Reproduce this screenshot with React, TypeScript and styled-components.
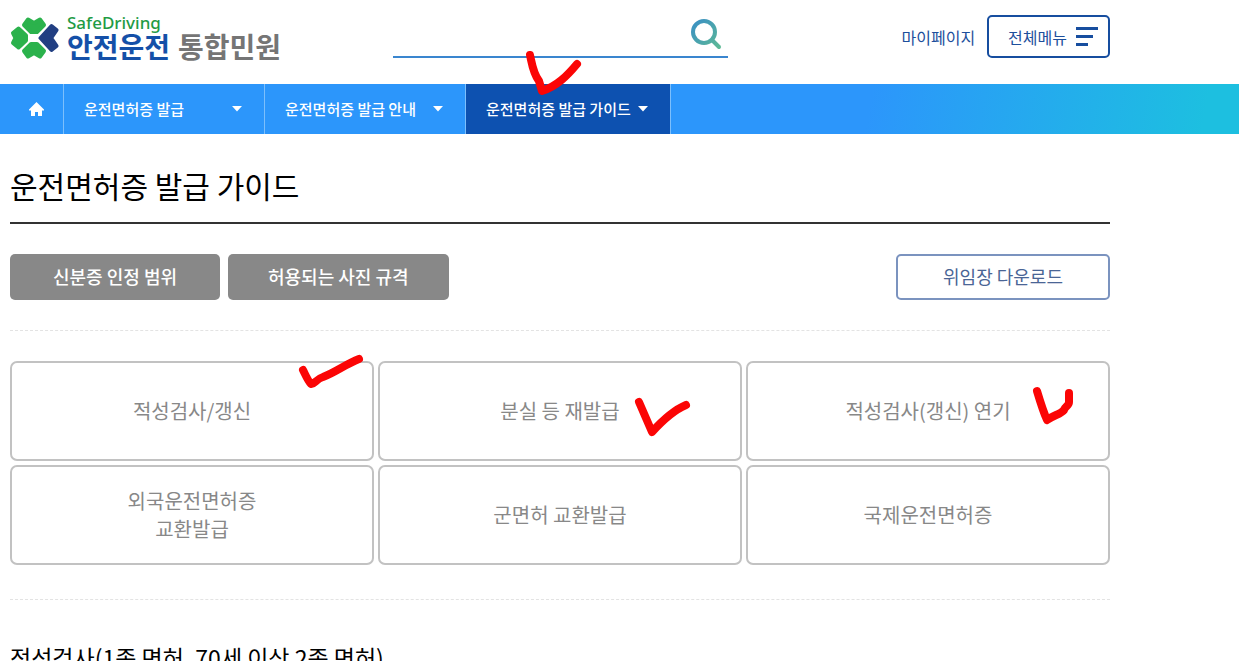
import React from "react";
import styled, { createGlobalStyle } from "styled-components";

const Global = createGlobalStyle`
  *, *::before, *::after { box-sizing: border-box; }
  body {
    margin: 0;
    background: #fff;
    color: #000;
    font-family: "Noto Sans CJK KR", "Noto Sans", sans-serif;
    word-break: keep-all;
  }
  button, input { font: inherit; }
  h1, h2 { margin: 0; }
`;

const Page = styled.div`
  height: 100vh;
  overflow-y: auto;
  scrollbar-width: none;
`;

const Container = styled.div`
  max-width: 1120px;
  padding: 0 10px;
`;

const HeaderRow = styled(Container)`
  display: flex;
  align-items: center;
  height: 84px;
  padding-bottom: 12px;
`;

const Logo = styled.a`
  display: flex;
  align-items: center;
  gap: 8px;
  flex: 0 0 272px;
  padding-top: 4px;
  color: #1450a8;
  text-decoration: none;
  white-space: nowrap;
`;

const LogoText = styled.span`
  display: flex;
  flex-direction: column;
  padding-bottom: 2px;
`;

const LogoEnglish = styled.span`
  font-family: "Noto Sans", sans-serif;
  font-size: 17px;
  font-weight: 500;
  line-height: 18px;
  color: #1f9b45;
`;

const LogoKorean = styled.span`
  display: flex;
  gap: 8px;
  font-size: 28px;
  font-weight: 700;
  line-height: 28px;
`;

const LogoSuffix = styled.span`
  color: #757575;
`;

const Search = styled.form`
  display: flex;
  align-items: center;
  flex: 0 1 335px;
  height: 44px;
  margin-left: 111px;
  border-bottom: 2px solid #3a86cf;
`;

const SearchInput = styled.input`
  flex: 1;
  min-width: 0;
  height: 40px;
  border: 0;
  outline: 0;
  background: transparent;
  font-size: 16px;
`;

const SearchButton = styled.button`
  display: flex;
  padding: 0 6px 2px 0;
  border: 0;
  background: transparent;
`;

const HeaderLinks = styled.div`
  display: flex;
  align-items: center;
  gap: 12px;
  margin-left: auto;
`;

const MyPage = styled.a`
  padding-top: 2px;
  font-size: 16px;
  line-height: 24px;
  color: #1d4f9c;
  text-decoration: none;
`;

const AllMenu = styled.button`
  display: flex;
  align-items: center;
  gap: 9px;
  height: 43px;
  padding: 0 10px 0 19px;
  border: 2px solid #174e9f;
  border-radius: 5px;
  background: #fff;
  color: #1d4f9c;
  font-size: 16px;
  line-height: 24px;
`;

const AllMenuLabel = styled.span`
  padding-top: 2px;
`;

const NavBar = styled.nav`
  display: flex;
  height: 50px;
  background: linear-gradient(100deg, #2c96fb 0%, #2c96fb 70%, #1dbfe0 97%, #1dbfe0 100%);
`;

const HomeLink = styled.a`
  display: flex;
  align-items: center;
  justify-content: flex-end;
  width: 64px;
  padding-right: 18px;
  border-right: 1px solid #7cbffc;
`;

const NavTab = styled.button<{ $active?: boolean }>`
  position: relative;
  display: flex;
  align-items: center;
  justify-content: space-between;
  gap: 7px;
  min-width: 201px;
  padding: 0 22px 0 20px;
  border: 0;
  border-right: 1px solid #7cbffc;
  background: ${(p) => (p.$active ? "#0d51b0" : "transparent")};
  color: #fff;
  font-size: 15px;
  font-weight: 500;
  white-space: nowrap;
`;

const NavLabel = styled.span`
  padding-bottom: 2px;
`;

const Title = styled.h1`
  padding: 28px 0 13px;
  border-bottom: 2px solid #333;
  font-size: 30px;
  font-weight: 400;
  line-height: 47px;
`;

const Actions = styled.div`
  display: flex;
  gap: 8px;
  padding: 30px 0;
  border-bottom: 1px dashed #e3e3e3;
`;

const ActionButton = styled.button`
  height: 46px;
  padding: 0 40px 2px;
  min-width: 210px;
  border: 0;
  border-radius: 5px;
  background: #888;
  color: #fff;
  font-size: 18px;
  font-weight: 500;
`;

const DownloadButton = styled(ActionButton)`
  min-width: 214px;
  margin-left: auto;
  border: 2px solid #7b93bf;
  background: #fff;
  color: #4a6595;
  font-weight: 400;
`;

const CardGrid = styled.div`
  display: grid;
  grid-template-columns: repeat(3, 1fr);
  gap: 4px;
  padding: 30px 0 34px;
  border-bottom: 1px dashed #e3e3e3;
`;

const Card = styled.button`
  position: relative;
  height: 100px;
  padding: 0 20px;
  border: 2px solid #c2c2c2;
  border-radius: 7px;
  background: #fff;
  color: #888;
  font-size: 20px;
  line-height: 28px;
  white-space: pre-line;
`;

const SectionTitle = styled.h2`
  padding: 39px 0;
  font-size: 23px;
  font-weight: 400;
  line-height: 36px;
`;

const Mark = styled.svg<{ $x: number; $y: number }>`
  position: absolute;
  z-index: 1;
  left: ${(p) => p.$x}px;
  top: ${(p) => p.$y}px;
  overflow: visible;
  pointer-events: none;
  fill: none;
  stroke: #fb0505;
  stroke-width: 8;
  stroke-linecap: round;
  stroke-linejoin: round;
`;

type MarkShape = { x: number; y: number; d: string };

const CheckMark = ({ x, y, d }: MarkShape) => (
  <Mark $x={x} $y={y} width="56" height="44" aria-hidden="true">
    <path d={d} />
  </Mark>
);

const Caret = () => (
  <svg width="10" height="6" viewBox="0 0 10 6" aria-hidden="true">
    <path d="M0 0h10L5 5.5z" fill="#fff" />
  </svg>
);

const LogoIcon = () => (
  <svg width="49" height="44" viewBox="0 0 49 44" aria-hidden="true">
    <g strokeLinejoin="round" strokeWidth="4">
      <path d="M18 3.500l6 3.500 6-3.500 4 5.500-7 7h-6L14 9z" fill="#2bb24c" stroke="#2bb24c" />
      <path d="M18 40.500l6-3.500 6 3.500 4-5.500-7-7h-6L14 35z" fill="#2bb24c" stroke="#2bb24c" />
      <path d="M8.500 12.500L3 17l2.500 5L3 27l5.500 4.500L16 24.500v-5z" fill="#2bb24c" stroke="#2bb24c" />
      <path d="M41.500 10L30.500 22l11 12 5-4L41 22l5.500-8z" fill="#223f82" stroke="#223f82" />
    </g>
  </svg>
);

const SearchIcon = () => (
  <svg width="32" height="32" viewBox="0 0 32 32" fill="none" aria-hidden="true">
    <defs>
      <linearGradient id="lens" x1="0" y1="0" x2="32" y2="32" gradientUnits="userSpaceOnUse">
        <stop offset="0" stopColor="#368bc9" />
        <stop offset="1" stopColor="#60bd91" />
      </linearGradient>
    </defs>
    <circle cx="14" cy="14" r="11" stroke="url(#lens)" strokeWidth="4" />
    <path d="M22 22l7 7" stroke="url(#lens)" strokeWidth="4" strokeLinecap="round" />
  </svg>
);

const MenuIcon = () => (
  <svg width="22" height="19" viewBox="0 0 22 19" fill="#174e9f" aria-hidden="true">
    <path d="M0 0h22v3H0zM0 8h17v3H0zM0 16h12v3H0z" />
  </svg>
);

const HomeIcon = () => (
  <svg width="16" height="15" viewBox="0 0 16 15" fill="#fff" aria-hidden="true">
    <path d="M7.500 0L15 7.500V8.500H13V14H9V10H6V14H2V8.500H0V7.500z" />
  </svg>
);

const tabs: { label: string; active?: boolean; mark?: MarkShape }[] = [
  { label: "운전면허증 발급" },
  { label: "운전면허증 발급 안내" },
  {
    label: "운전면허증 발급 가이드",
    active: true,
    mark: { x: 60, y: -34, d: "M4 5C6 14 7 23 13 31L16 41C31 36 41 26 51 14" },
  },
];

const cards: { label: string; mark?: MarkShape }[] = [
  { label: "적성검사/갱신", mark: { x: 286, y: -9, d: "M5 16C8 22 10 27 13 30C16 31 18 25 25 23C38 18 48 10 61 5" } },
  { label: "분실 등 재발급", mark: { x: 254, y: 34, d: "M5 5L18 35C28 24 40 13 52 8" } },
  { label: "적성검사(갱신) 연기", mark: { x: 284, y: 22, d: "M5 6C8 16 11 26 15 35C22 30 29 29 32 25C33 21 37 21 37 17L37 8" } },
  { label: "외국운전면허증\n교환발급" },
  { label: "군면허 교환발급" },
  { label: "국제운전면허증" },
];

export default function App() {
  return (
    <Page>
      <Global />
      <header>
        <HeaderRow>
          <Logo href="#">
            <LogoIcon />
            <LogoText>
              <LogoEnglish>SafeDriving</LogoEnglish>
              <LogoKorean>
                <span>안전운전</span>
                <LogoSuffix>통합민원</LogoSuffix>
              </LogoKorean>
            </LogoText>
          </Logo>
          <Search role="search">
            <SearchInput type="search" aria-label="검색어" />
            <SearchButton type="button" aria-label="검색">
              <SearchIcon />
            </SearchButton>
          </Search>
          <HeaderLinks>
            <MyPage href="#">마이페이지</MyPage>
            <AllMenu type="button">
              <AllMenuLabel>전체메뉴</AllMenuLabel>
              <MenuIcon />
            </AllMenu>
          </HeaderLinks>
        </HeaderRow>
        <NavBar>
          <HomeLink href="#" aria-label="홈">
            <HomeIcon />
          </HomeLink>
          {tabs.map((tab) => (
            <NavTab key={tab.label} type="button" $active={tab.active}>
              <NavLabel>{tab.label}</NavLabel>
              <Caret />
              {tab.mark && <CheckMark {...tab.mark} />}
            </NavTab>
          ))}
        </NavBar>
      </header>
      <Container as="main">
        <Title>운전면허증 발급 가이드</Title>
        <Actions>
          <ActionButton type="button">신분증 인정 범위</ActionButton>
          <ActionButton type="button">허용되는 사진 규격</ActionButton>
          <DownloadButton type="button">위임장 다운로드</DownloadButton>
        </Actions>
        <CardGrid>
          {cards.map((card) => (
            <Card key={card.label} type="button">
              {card.label}
              {card.mark && <CheckMark {...card.mark} />}
            </Card>
          ))}
        </CardGrid>
        <SectionTitle>적성검사(1종 면허, 70세 이상 2종 면허)</SectionTitle>
      </Container>
    </Page>
  );
}
